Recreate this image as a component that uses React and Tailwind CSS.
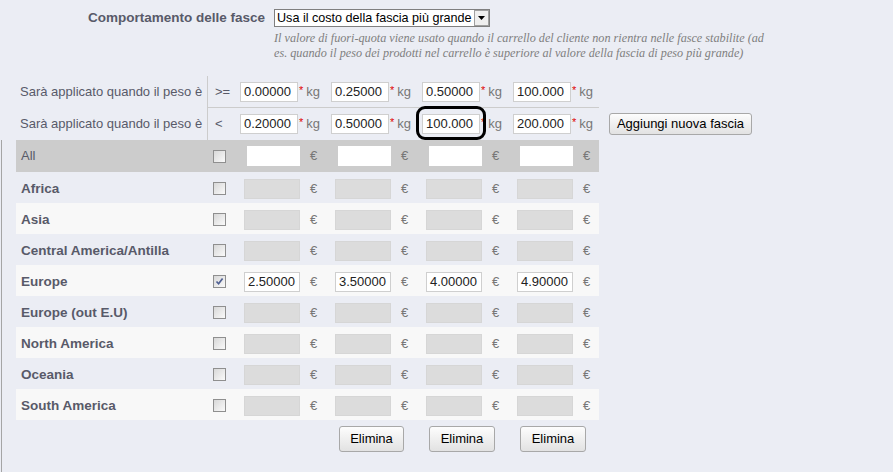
import React from "react";

function Checkbox({ checked }) {
  return (
    <span className="relative inline-block w-[13px] h-[13px] border border-[#8F8F8F] bg-linear-to-br from-[#D8D8D8] to-[#FAFAFA]">
      {checked && (
        <svg viewBox="0 0 11 11" className="absolute left-0 top-0 w-[11px] h-[11px]">
          <path d="M2.5 5.5 L4.6 7.8 L8.6 2.6" fill="none" stroke="#4F5F92" strokeWidth="1.7" />
        </svg>
      )}
    </span>
  );
}

function WeightCell({ value, ring, last }) {
  return (
    <div className={`${last ? "w-[85px]" : "w-[91px]"} flex items-center shrink-0 relative self-stretch`}>
      {ring && (
        <div className="absolute left-[-6px] top-[-2px] w-[70px] h-[34px] border-[3px] border-black rounded-[9px]" />
      )}
      <div className="w-[58px] h-[20px] bg-white border border-[#CFCFCF] text-[13px] text-[#222] pl-[3px] leading-[18px] overflow-hidden whitespace-nowrap">
        {value}
      </div>
      <span className="text-[#E00000] text-[11px] self-start mt-[9px] ml-[1px] leading-none">*</span>
      <span className="ml-[3px] text-[#777] text-[13px]">kg</span>
    </div>
  );
}

function ZoneRow({ name, bg, allRow, checked, values }) {
  return (
    <div className={`flex items-center ${allRow ? "h-[32px]" : "h-[31px] pt-[2px]"} w-[583px] ${bg}`}>
      <div
        className={`w-[192px] pl-[5px] ${allRow ? "font-normal text-[13px]" : "font-bold text-[13.5px] pt-[2px]"} text-[#585A69] whitespace-nowrap`}
      >
        {name}
      </div>
      <div className="w-[36px] pl-[5px] flex items-center">
        <Checkbox checked={checked} />
      </div>
      {[0, 1, 2, 3].map((i) => (
        <div key={i} className={`${i === 3 ? "w-[82px]" : "w-[91px]"} flex items-center shrink-0`}>
          {allRow ? (
            <div className="w-[56px] h-[20px] pl-[3px] flex items-center">
              <div className="w-[53px] h-[20px] bg-white" />
            </div>
          ) : values ? (
            <div className="w-[56px] h-[20px] bg-white border border-[#CFCFCF] text-[13px] text-[#222] pl-[3px] leading-[18px] overflow-hidden whitespace-nowrap">
              {values[i]}
            </div>
          ) : (
            <div className="w-[56px] h-[20px] bg-[#DCDCDC] border border-[#D6D6D6]" />
          )}
          <span className="ml-[10px] text-[#777] text-[13px]">€</span>
        </div>
      ))}
    </div>
  );
}

function Btn({ children, className }) {
  return (
    <div
      className={`flex items-center justify-center border border-[#A8A8A8] rounded-[3px] bg-linear-to-b from-[#FDFDFD] to-[#E2E2E2] text-[13px] text-black ${className}`}
    >
      {children}
    </div>
  );
}

export default function App() {
  const zones = [
    { name: "All", bg: "bg-[#CCCCCC]", allRow: true },
    { name: "Africa", bg: "bg-[#EBEDF4]" },
    { name: "Asia", bg: "bg-[#F8F8F8]" },
    { name: "Central America/Antilla", bg: "bg-[#EBEDF4]" },
    { name: "Europe", bg: "bg-[#F8F8F8]", checked: true, values: ["2.50000", "3.50000", "4.00000", "4.90000"] },
    { name: "Europe (out E.U)", bg: "bg-[#EBEDF4]" },
    { name: "North America", bg: "bg-[#F8F8F8]" },
    { name: "Oceania", bg: "bg-[#EBEDF4]" },
    { name: "South America", bg: "bg-[#F8F8F8]" },
  ];

  return (
    <div className="w-[893px] h-[472px] overflow-hidden bg-[#EBEDF4] font-['Liberation_Sans',Arial,sans-serif] flex flex-col">
      {/* header */}
      <div className="h-[76px] shrink-0 pt-[9px]">
        <div className="flex items-center h-[18px]">
          <div className="w-[265px] text-right text-[13.5px] font-bold text-[#585A69] whitespace-nowrap">
            Comportamento delle fasce
          </div>
          <div className="ml-[9px] w-[216px] h-[18px] border border-[#7F7F7F] bg-white flex items-center">
            <span className="flex-1 pl-[2px] text-[12.6px] text-black whitespace-nowrap overflow-hidden leading-[16px]">
              Usa il costo della fascia più grande
            </span>
            <span className="w-[15px] h-[16px] border border-[#A0A0A0] bg-[#EFEFEF] flex items-center justify-center shrink-0">
              <svg viewBox="0 0 7 4" className="w-[7px] h-[4px]">
                <path d="M0 0 H7 L3.5 4 Z" fill="#000" />
              </svg>
            </span>
          </div>
        </div>
        <div className="ml-[274px] mt-[4px] text-[12.2px] leading-[15px] italic text-[#7F7F7F] font-['Liberation_Serif',Georgia,serif] whitespace-nowrap">
          Il valore di fuori-quota viene usato quando il carrello del cliente non rientra nelle fasce stabilite (ad
          <br />
          es. quando il peso dei prodotti nel carrello è superiore al valore della fascia di peso più grande)
        </div>
      </div>

      {/* weight ranges */}
      <div className="flex ml-[15px] shrink-0">
        <div className="w-[192px] flex flex-col text-[13px] text-[#585A69]">
          <div className="h-[32px] flex items-center pl-[5px] whitespace-nowrap">Sarà applicato quando il peso è</div>
          <div className="h-[32px] flex items-center pl-[5px] whitespace-nowrap">Sarà applicato quando il peso è</div>
        </div>
        <div className="w-[392px] border-l border-[#CCCCCC] flex flex-col">
          <div className="h-[32px] flex items-center border-b border-[#CCCCCC]">
            <div className="w-[32px] pl-[7px] text-[13px] text-[#585A69]">&gt;=</div>
            <WeightCell value="0.00000" />
            <WeightCell value="0.25000" />
            <WeightCell value="0.50000" />
            <WeightCell value="100.000" last />
          </div>
          <div className="h-[32px] flex items-center">
            <div className="w-[32px] pl-[7px] text-[13px] text-[#585A69]">&lt;</div>
            <WeightCell value="0.20000" />
            <WeightCell value="0.50000" />
            <WeightCell value="100.000" ring />
            <WeightCell value="200.000" last />
          </div>
        </div>
        <div className="flex flex-col">
          <div className="h-[32px]" />
          <div className="h-[32px] flex items-center pl-[10px]">
            <Btn className="w-[143px] h-[22px]">Aggiungi nuova fascia</Btn>
          </div>
        </div>
      </div>

      {/* zones */}
      <div className="flex-1 ml-[1px] border-l border-[#A5A5A5] pl-[14px]">
        {zones.map((z) => (
          <ZoneRow key={z.name} {...z} />
        ))}
        <div className="flex mt-[6px]">
          <div className="w-[319px]" />
          <div className="w-[91px] pl-[4px]">
            <Btn className="w-[65px] h-[26px]">Elimina</Btn>
          </div>
          <div className="w-[91px] pl-[3px]">
            <Btn className="w-[66px] h-[26px]">Elimina</Btn>
          </div>
          <div className="w-[91px] pl-[3px]">
            <Btn className="w-[66px] h-[26px]">Elimina</Btn>
          </div>
        </div>
      </div>
    </div>
  );
}
